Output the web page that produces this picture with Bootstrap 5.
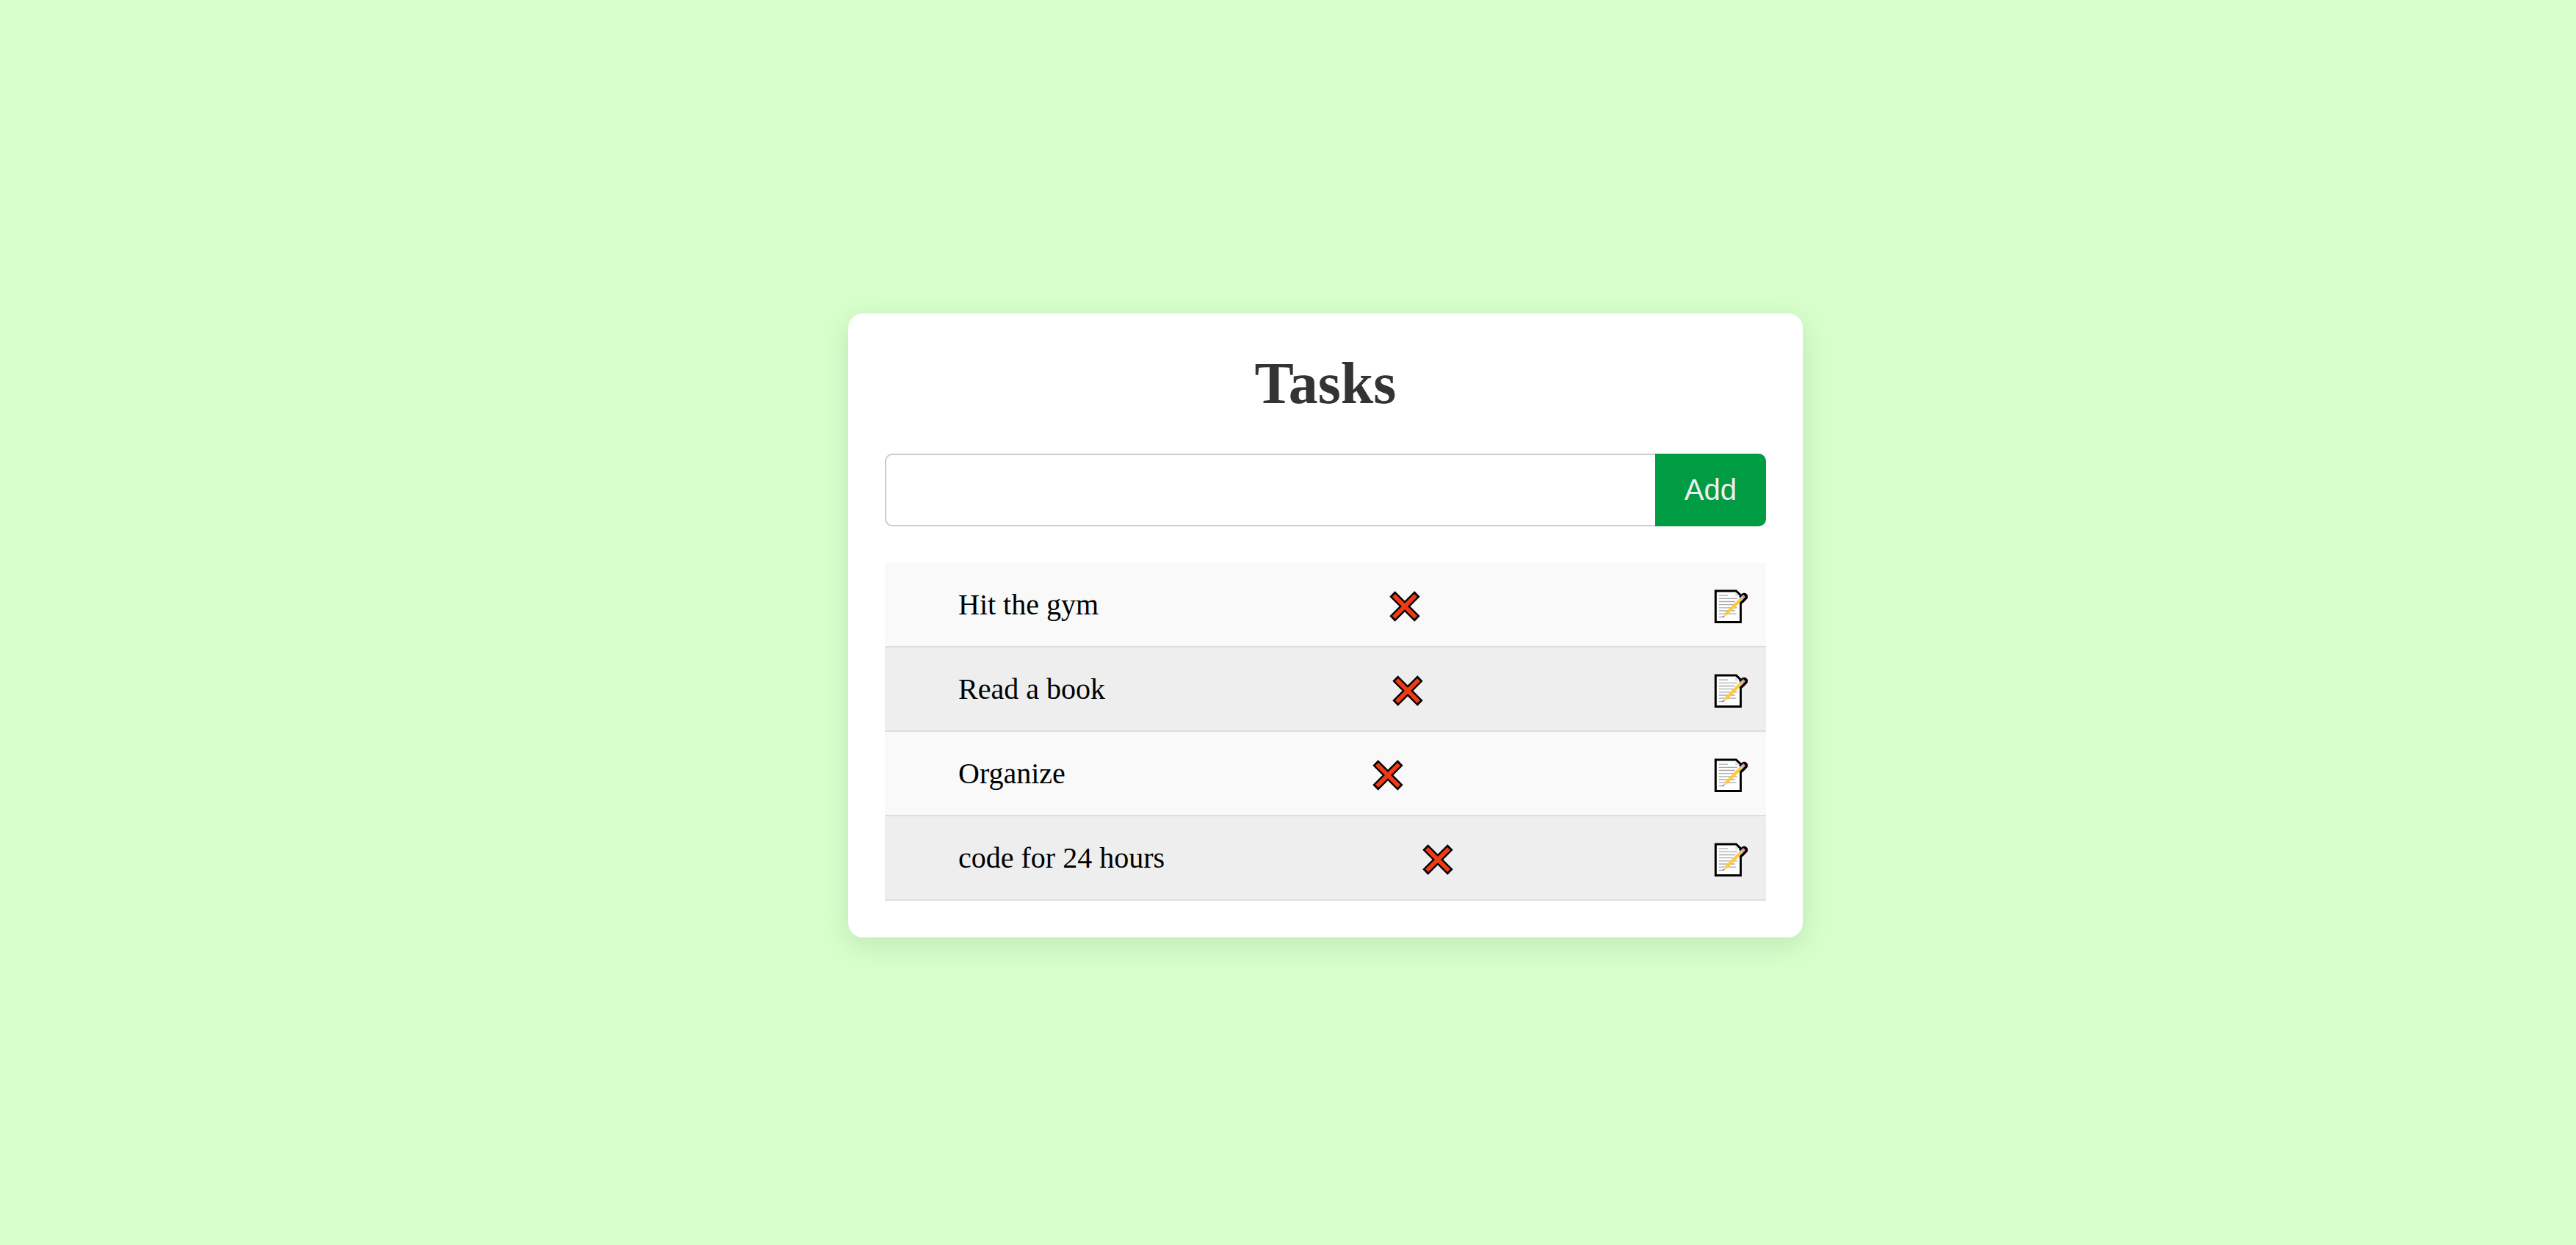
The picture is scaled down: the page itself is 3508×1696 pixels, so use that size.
<!DOCTYPE html>
<html lang="en">
<head>
<meta charset="utf-8">
<meta name="viewport" content="width=device-width, initial-scale=1">
<title>Tasks</title>
<link href="https://cdn.jsdelivr.net/npm/bootstrap@5.3.0/dist/css/bootstrap.min.css" rel="stylesheet">
<style>
  body {
    background: #d6ffcb;
    color: #000;
    font-family: "Liberation Serif", "Times New Roman", serif;
    font-size: 40px;
    line-height: 46px;
  }
  .task-page { padding: 8px 0 0 102px; }
  .task-card {
    width: 100%;
    max-width: 1300px;
    padding: 50px;
    border: 0;
    border-radius: 20px;
    box-shadow: 0 10px 38px rgba(0, 0, 0, .1);
  }
  .task-title {
    margin-bottom: 50px;
    color: #333;
    font-size: 80px;
    font-weight: 700;
    line-height: 91px;
  }
  .task-form { margin-bottom: 50px; }
  .task-form .form-control {
    padding: 24px;
    border: 2px solid #ccc;
    border-right: 0;
    border-radius: 10px 0 0 10px;
    font-size: 40px;
    line-height: 47px;
  }
  .task-form .btn {
    padding: 26px 40px;
    border: 0;
    border-radius: 0 10px 10px 0;
    background: #009c43;
    color: #eee;
    font-family: "Liberation Sans", Arial, sans-serif;
    font-size: 40px;
    line-height: 47px;
  }
  .task-item {
    padding: 32px 25px 31px 100px;
    border: 0;
    border-bottom: 2px solid #ddd;
    background: #f9f9f9;
    color: #000;
  }
  .task-item:nth-child(even) { background: #eee; }
  .icon-btn { width: 50px; height: 50px; line-height: 0; }
  .icon-btn svg { width: 50px; height: 50px; overflow: visible; }
</style>
<script src="https://cdn.jsdelivr.net/npm/bootstrap@5.3.0/dist/js/bootstrap.bundle.min.js"></script>
</head>
<body>
<svg class="d-none" aria-hidden="true">
  <symbol id="cross" viewBox="0 0 50 50">
    <path d="M8 10 42 44M42 10 8 44" stroke="#000" stroke-width="10.4"/>
    <path d="M10 12 40 42M40 12 10 42" stroke="#f03a17" stroke-width="6"/>
  </symbol>
  <symbol id="memo" viewBox="0 0 50 50" overflow="visible">
    <path d="M6.300 6H34.300L40.400 12V48.500H6.300Z" fill="#fff" stroke="#000" stroke-width="3"/>
    <path d="M33 7.500V13.500H38.800Z" fill="#e3e3e3"/>
    <path d="M40 19 45.200 13.800" stroke="#000" stroke-width="10" stroke-linecap="round"/>
    <path d="M8 14H38.900V47H8Z" fill="#fff"/>
    <path d="M10.700 12.200H23M10.700 16.300H36M10.700 20.500H33M10.700 24.700H36M10.700 28.900H36M10.700 33H33M10.700 37.200H34.500M10.700 41.500H17" stroke="#aaa" stroke-width="1.300"/>
    <path d="M20 38 42 16" stroke="#ffc83d" stroke-width="4.200"/>
    <path d="M18.300 36.700 21.300 39.700 16.500 41.500Z" fill="#f7cfc0"/>
    <path d="M16 41.800 18 40.200" stroke="#555" stroke-width="1.200"/>
    <path d="M40.500 17.500 44 14" stroke="#c4c4c4" stroke-width="4.200"/>
    <path d="M43.600 14.400 45.500 12.600" stroke="#f59282" stroke-width="4.200"/>
  </symbol>
</svg>

<main class="task-page min-vh-100 d-flex align-items-center justify-content-center">
  <section class="task-card card">
    <h1 class="task-title text-center" id="tasks-title">Tasks</h1>
    <form class="task-form d-flex" onsubmit="return false">
      <input class="form-control flex-grow-1" type="text" id="new-task" aria-label="New task">
      <button class="btn flex-shrink-0" type="submit">Add</button>
    </form>
    <ul class="list-group rounded-0" aria-labelledby="tasks-title">
      <li class="task-item list-group-item d-flex justify-content-between align-items-center">
        <span>Hit the gym</span>
        <button class="icon-btn btn p-0 border-0" type="button" aria-label="Delete"><svg fill="none"><use href="#cross"/></svg></button>
        <button class="icon-btn btn p-0 border-0" type="button" aria-label="Edit"><svg fill="none"><use href="#memo"/></svg></button>
      </li>
      <li class="task-item list-group-item d-flex justify-content-between align-items-center">
        <span>Read a book</span>
        <button class="icon-btn btn p-0 border-0" type="button" aria-label="Delete"><svg fill="none"><use href="#cross"/></svg></button>
        <button class="icon-btn btn p-0 border-0" type="button" aria-label="Edit"><svg fill="none"><use href="#memo"/></svg></button>
      </li>
      <li class="task-item list-group-item d-flex justify-content-between align-items-center">
        <span>Organize</span>
        <button class="icon-btn btn p-0 border-0" type="button" aria-label="Delete"><svg fill="none"><use href="#cross"/></svg></button>
        <button class="icon-btn btn p-0 border-0" type="button" aria-label="Edit"><svg fill="none"><use href="#memo"/></svg></button>
      </li>
      <li class="task-item list-group-item d-flex justify-content-between align-items-center">
        <span>code for 24 hours</span>
        <button class="icon-btn btn p-0 border-0" type="button" aria-label="Delete"><svg fill="none"><use href="#cross"/></svg></button>
        <button class="icon-btn btn p-0 border-0" type="button" aria-label="Edit"><svg fill="none"><use href="#memo"/></svg></button>
      </li>
    </ul>
  </section>
</main>
</body>
</html>
